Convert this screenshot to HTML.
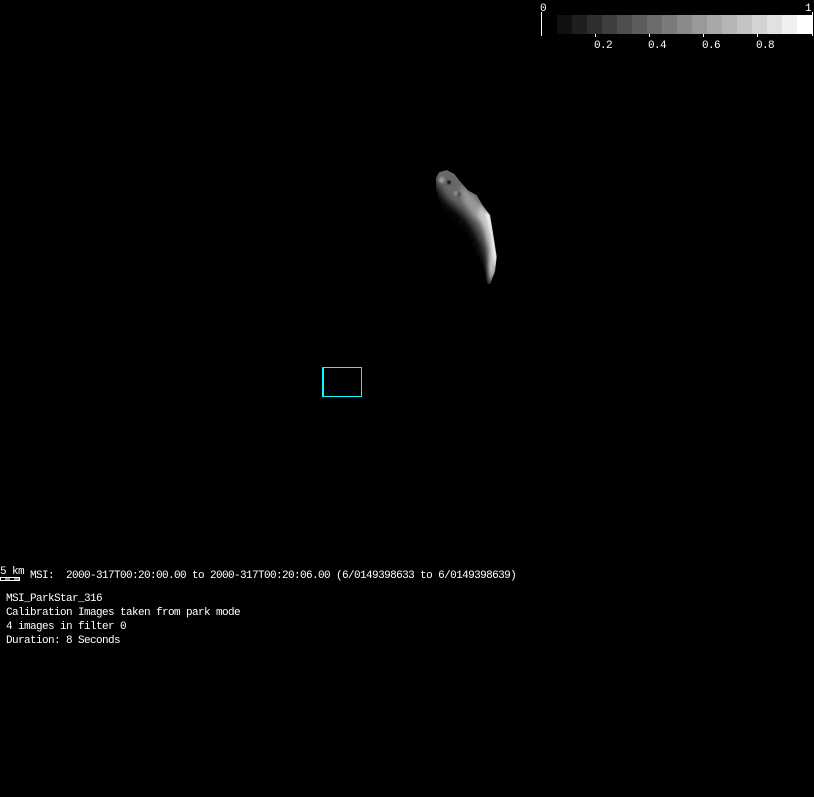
<!DOCTYPE html>
<html>
<head>
<meta charset="utf-8">
<style>
html,body{margin:0;padding:0;background:#000;width:814px;height:797px;overflow:hidden}
svg{display:block;position:absolute;left:0;top:0}
text{font-family:"Liberation Mono",monospace;font-size:11px;letter-spacing:-.6px;fill:#fff;white-space:pre}
</style>
</head>
<body>
<svg width="814" height="797" viewBox="0 0 814 797" xmlns="http://www.w3.org/2000/svg">
<defs>
<clipPath id="c"><path d="M33 55L42 37L65 30L88 42L108 68L130 92L155 105L172 135L195 165L205 225L215 290L210 335L195 372L187 370L178 320L150 265L125 215L100 190L70 165L45 125L33 85Z"/></clipPath>
<filter id="b3" x="-50%" y="-50%" width="200%" height="200%"><feGaussianBlur stdDeviation="3"/></filter>
<filter id="b6" x="-50%" y="-50%" width="200%" height="200%"><feGaussianBlur stdDeviation="6"/></filter>
<filter id="b10" x="-50%" y="-50%" width="200%" height="200%"><feGaussianBlur stdDeviation="13"/></filter>
<filter id="px" x="-50%" y="-50%" width="200%" height="200%"><feGaussianBlur stdDeviation="2"/></filter>
</defs>
<rect width="814" height="797" fill="#000"/>
<!-- colour bar -->
<rect x="557" y="15" width="15" height="19" fill="#101010"/>
<rect x="572" y="15" width="15" height="19" fill="#1f1f1f"/>
<rect x="587" y="15" width="15" height="19" fill="#2e2e2e"/>
<rect x="602" y="15" width="15" height="19" fill="#3e3e3e"/>
<rect x="617" y="15" width="15" height="19" fill="#4e4e4e"/>
<rect x="632" y="15" width="15" height="19" fill="#5d5d5d"/>
<rect x="647" y="15" width="15" height="19" fill="#6c6c6c"/>
<rect x="662" y="15" width="15" height="19" fill="#7b7b7b"/>
<rect x="677" y="15" width="15" height="19" fill="#8a8a8a"/>
<rect x="692" y="15" width="15" height="19" fill="#999"/>
<rect x="707" y="15" width="15" height="19" fill="#a8a8a8"/>
<rect x="722" y="15" width="15" height="19" fill="#b5b5b5"/>
<rect x="737" y="15" width="15" height="19" fill="#c4c4c4"/>
<rect x="752" y="15" width="15" height="19" fill="#d3d3d3"/>
<rect x="767" y="15" width="15" height="19" fill="#e1e1e1"/>
<rect x="782" y="15" width="15" height="19" fill="#f0f0f0"/>
<rect x="797" y="15" width="15" height="19" fill="#fff"/>
<rect x="541" y="12" width="1" height="24" fill="#fff"/>
<rect x="812" y="12" width="1" height="24" fill="#fff"/>
<rect x="595" y="34" width="1" height="3" fill="#fff"/>
<rect x="649" y="34" width="1" height="3" fill="#fff"/>
<rect x="703" y="34" width="1" height="3" fill="#fff"/>
<rect x="757" y="34" width="1" height="3" fill="#fff"/>
<text x="540" y="11">0</text>
<text x="805" y="11">1</text>
<text x="594" y="48">0.2</text>
<text x="648" y="48">0.4</text>
<text x="702" y="48">0.6</text>
<text x="756" y="48">0.8</text>
<!-- asteroid -->
<g transform="translate(425 160) scale(.33333)">
<g clip-path="url(#c)">
<rect x="10" y="10" width="220" height="380" fill="#686868"/>
<path d="M10 45L38 80L62 118L102 150L138 190L168 245L192 320L200 390L100 390L10 200Z" fill="#000" filter="url(#b10)"/>
<path d="M105 75L135 100L160 125L180 175L150 175L115 125Z" fill="#989898" filter="url(#b6)"/>
<path d="M165 130L195 165L205 225L215 290L210 335L195 372L190 320L192 270L178 210L158 170Z" fill="#c8c8c8" filter="url(#b6)"/>
<path d="M180 155L195 165L205 225L215 290L211 325L203 285L197 225Z" fill="#f2f2f2" filter="url(#b3)"/>
<ellipse cx="50" cy="60" rx="8" ry="9" fill="#a0a0a0" filter="url(#b3)"/>
<ellipse cx="72" cy="67" rx="6" ry="6" fill="#141414" filter="url(#px)"/>
<ellipse cx="102" cy="103" rx="4" ry="6" fill="#444" filter="url(#px)"/>
<ellipse cx="92" cy="100" rx="5" ry="6" fill="#999" filter="url(#b3)"/>
<ellipse cx="110" cy="185" rx="10" ry="6" fill="#0a0a0a" filter="url(#b3)"/>
<ellipse cx="165" cy="235" rx="4" ry="6" fill="#444" filter="url(#b3)"/>
</g>
</g>
<!-- cyan box -->
<rect x="322.5" y="367.5" width="39" height="29" fill="none" stroke="#00ffff" stroke-width="1"/>
<rect x="323" y="367" width="1" height="30" fill="#0ff"/>
<!-- scale bar -->
<text x="0" y="574">5 km</text>
<rect x="0" y="577" width="20" height="1" fill="#fff"/>
<rect x="0" y="580" width="20" height="1" fill="#fff"/>
<rect x="0" y="578" width="1" height="2" fill="#fff"/>
<rect x="19" y="578" width="1" height="2" fill="#fff"/>
<rect x="5" y="578" width="5" height="2" fill="#888"/>
<rect x="14" y="578" width="5" height="2" fill="#888"/>
<text x="30" y="578" xml:space="preserve">MSI:  2000-317T00:20:00.00 to 2000-317T00:20:06.00 (6/0149398633 to 6/0149398639)</text>
<text x="6" y="601">MSI_ParkStar_316</text>
<text x="6" y="615">Calibration Images taken from park mode</text>
<text x="6" y="629">4 images in filter 0</text>
<text x="6" y="643">Duration: 8 Seconds</text>
</svg>
</body>
</html>
